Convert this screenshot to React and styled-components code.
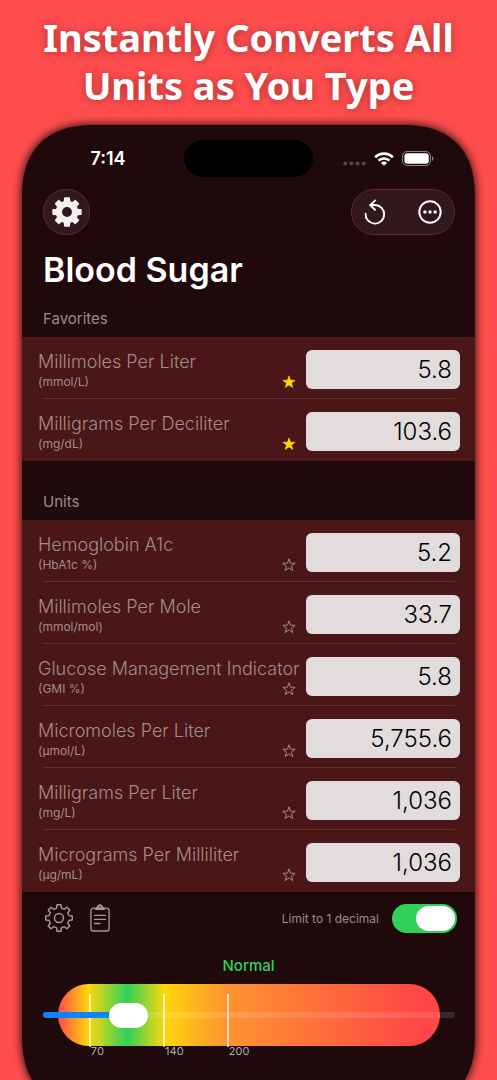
import styled, { createGlobalStyle } from "styled-components";
import React, { useState } from "react";

const MIN = 40;
const MAX = 400;
const MARKS = [70, 140, 200];

const FAVORITES = [
  { name: "Millimoles Per Liter", unit: "(mmol/L)", value: "5.8" },
  { name: "Milligrams Per Deciliter", unit: "(mg/dL)", value: "103.6" },
];

const UNITS = [
  { name: "Hemoglobin A1c", unit: "(HbA1c %)", value: "5.2" },
  { name: "Millimoles Per Mole", unit: "(mmol/mol)", value: "33.7" },
  { name: "Glucose Management Indicator", unit: "(GMI %)", value: "5.8" },
  { name: "Micromoles Per Liter", unit: "(µmol/L)", value: "5,755.6" },
  { name: "Milligrams Per Liter", unit: "(mg/L)", value: "1,036" },
  { name: "Micrograms Per Milliliter", unit: "(µg/mL)", value: "1,036" },
];

const toPercent = (value) => ((value - MIN) / (MAX - MIN)) * 100;

// outline of a gear with eight round-cornered teeth
const gearPath = (c, outer, inner) => {
  const points = [];
  for (let i = 0; i < 8; i++) {
    const a = (i * Math.PI) / 4 - Math.PI / 2;
    [[-0.24, inner], [-0.15, outer], [0.15, outer], [0.24, inner]].forEach(([d, r]) => {
      points.push(`${(c + r * Math.cos(a + d)).toFixed(2)} ${(c + r * Math.sin(a + d)).toFixed(2)}`);
    });
  }
  return `M${points.join("L")}Z`;
};

const STAR = "M7 0.8L8.5 5.2L13.2 5.3L9.5 8.1L10.8 12.6L7 9.9L3.2 12.6L4.5 8.1L0.8 5.3L5.5 5.2Z";

const UnitRow = ({ name, unit, value, favorite }) => {
  const [starred, setStarred] = useState(favorite);
  const id = unit.replace(/[^\w]/g, "");

  return (
    <Row>
      <RowBody>
        <Name htmlFor={id}>{name}</Name>
        <UnitLine>
          <Unit>{unit}</Unit>
          <StarButton type="button" aria-label={`Favorite ${name}`} onClick={() => setStarred(!starred)}>
            <svg width="14" height="14" viewBox="0 0 14 14">
              <path
                d={STAR}
                fill={starred ? "#ffd60a" : "none"}
                stroke={starred ? "#ffd60a" : "#a39596"}
                strokeWidth={starred ? 0.6 : 0.9}
                strokeLinejoin="round"
              />
            </svg>
          </StarButton>
        </UnitLine>
      </RowBody>
      <Value id={id} type="text" inputMode="decimal" defaultValue={value} />
    </Row>
  );
};

const App = () => {
  const [level, setLevel] = useState(103.6);

  return (
    <>
      <GlobalStyle />
      <Page>
        <Headline>
          Instantly Converts All
          <br />
          Units as You Type
        </Headline>
        <Phone>
          <StatusBar>
            <Time>7:14</Time>
            <Island />
            <StatusIcons>
              <svg width="23" height="5" viewBox="0 0 23 5" fill="#584648">
                <circle cx="2.3" cy="2.5" r="2" />
                <circle cx="8.4" cy="2.5" r="2" />
                <circle cx="14.5" cy="2.5" r="2" />
                <circle cx="20.6" cy="2.5" r="2" />
              </svg>
              <svg width="20" height="14" viewBox="0 0 20 14" fill="none" stroke="#fff" strokeWidth="2.6">
                <path d="M1.2 5.2C6.2 0.4 13.8 0.4 18.8 5.2" />
                <path d="M4.5 8.6C7.6 5.7 12.4 5.7 15.5 8.6" />
                <path d="M10 13.8L6.9 10.7C8.6 9.1 11.4 9.1 13.1 10.7Z" fill="#fff" stroke="none" />
              </svg>
              <svg width="32" height="15" viewBox="0 0 32 15">
                <rect x="0.5" y="0.5" width="28" height="14" rx="4.6" fill="none" stroke="#8f8485" />
                <rect x="2.4" y="2.3" width="24.4" height="10.4" rx="3" fill="#fff" />
                <path d="M30 5C31.9 5.8 31.9 9.2 30 10Z" fill="#8f8485" />
              </svg>
            </StatusIcons>
          </StatusBar>

          <NavBar>
            <Capsule>
              <NavButton type="button" aria-label="Settings">
                <svg width="30" height="30" viewBox="0 0 30 30">
                  <path
                    d={`${gearPath(15, 14, 10.6)}M15 9.2a5.8 5.8 0 1 0 0 11.6a5.8 5.8 0 1 0 0-11.6Z`}
                    fill="#f5f0f1"
                    fillRule="evenodd"
                    stroke="#f5f0f1"
                    strokeWidth="1.7"
                    strokeLinejoin="round"
                  />
                </svg>
              </NavButton>
            </Capsule>
            <Capsule $group>
              <NavButton type="button" aria-label="Reset">
                <Icon width="24" height="26" viewBox="0 0 24 26" strokeWidth="1.9">
                  <path d="M2.6 14.6A9.3 9.3 0 1 0 12 6L7.6 6" />
                  <path d="M12.2 1.4L7.2 6.1L12 10.8" />
                </Icon>
              </NavButton>
              <NavButton type="button" aria-label="More">
                <Icon width="24" height="24" viewBox="0 0 24 24" strokeWidth="1.9">
                  <circle cx="12" cy="12" r="10.7" />
                  <g fill="#fff" stroke="none">
                    <circle cx="6.9" cy="12" r="1.7" />
                    <circle cx="12" cy="12" r="1.7" />
                    <circle cx="17.1" cy="12" r="1.7" />
                  </g>
                </Icon>
              </NavButton>
            </Capsule>
          </NavBar>

          <Title>Blood Sugar</Title>

          <SectionTitle>Favorites</SectionTitle>
          <List>
            {FAVORITES.map((item) => (
              <UnitRow key={item.unit} {...item} favorite />
            ))}
          </List>

          <SectionTitle $tall>Units</SectionTitle>
          <List>
            {UNITS.map((item) => (
              <UnitRow key={item.unit} {...item} favorite={false} />
            ))}
          </List>

          <Toolbar>
            <ToolButton type="button" aria-label="Options">
              <svg width="30" height="30" viewBox="0 0 30 30" fill="none" stroke="#a39b9c" strokeWidth="1.4" strokeLinejoin="round">
                <path d={gearPath(15, 13.4, 10.2)} />
                <circle cx="15" cy="15" r="4.5" />
              </svg>
            </ToolButton>
            <ToolButton type="button" aria-label="Copy">
              <svg width="20" height="28" viewBox="0 0 20 28" fill="none" stroke="#a39b9c" strokeWidth="1.3" strokeLinecap="round">
                <path d="M5 4.2H3.2A2.3 2.3 0 0 0 0.9 6.5V24.7A2.3 2.3 0 0 0 3.2 27H16.8A2.3 2.3 0 0 0 19.1 24.7V6.5A2.3 2.3 0 0 0 16.8 4.2H15" />
                <path d="M5.8 5.4V4.2Q5.8 3.4 7.6 3.3A2.4 2.4 0 0 1 12.4 3.3Q14.2 3.4 14.2 4.2V5.4Z" fill="#a39b9c" />
                <circle cx="10" cy="3" r="0.8" fill="#1f090b" stroke="none" />
                <path d="M4.6 11.3H15.4M4.6 15.4H15.4M4.6 19.5H10" />
              </svg>
            </ToolButton>
            <SwitchLabel htmlFor="limit">Limit to 1 decimal</SwitchLabel>
            <Switch id="limit" type="checkbox" role="switch" defaultChecked />
          </Toolbar>

          <Level>Normal</Level>
          <Gauge>
            <Band>
              {MARKS.map((mark) => (
                <Mark key={mark} style={{ left: `${toPercent(mark)}%` }}>
                  {mark}
                </Mark>
              ))}
            </Band>
            <Range
              type="range"
              aria-label="Blood sugar in mg/dL"
              min={MIN}
              max={MAX}
              step="0.1"
              value={level}
              onChange={(e) => setLevel(Number(e.target.value))}
              style={{ "--fill": `${toPercent(level)}%` }}
            />
          </Gauge>
        </Phone>
      </Page>
    </>
  );
};

export default App;

const GlobalStyle = createGlobalStyle`
  * {
    box-sizing: border-box;
  }

  body {
    margin: 0;
    background: #ff4d4d;
    font-family: Inter, "Liberation Sans", sans-serif;
  }

  button {
    display: flex;
    padding: 0;
    border: 0;
    background: none;
    cursor: pointer;
  }
`

const Page = styled.main`
  height: 100vh;
  overflow: hidden;
  padding: 13px 22px 0;
`

const Headline = styled.h1`
  margin: 0 0 16px;
  text-align: center;
  color: #ffffff;
  font-family: "Noto Sans", "Open Sans", sans-serif;
  font-size: 38px;
  font-weight: 700;
  line-height: 48px;
  text-shadow: 0 1px 8px rgba(0, 0, 0, 0.35);
`

const Phone = styled.section`
  padding-bottom: 62px;
  border-radius: 74px;
  corner-shape: superellipse(1.3);
  background: #1f090b;
  box-shadow: 0 0 9px 1px rgba(0, 0, 0, 0.8);
`

const StatusBar = styled.div`
  display: grid;
  grid-template-columns: 1fr 129px 1fr;
  align-items: center;
  padding-top: 15px;
`

const Time = styled.span`
  padding-left: 10px;
  text-align: center;
  color: #ffffff;
  font-size: 18px;
  font-weight: 600;
`

const Island = styled.div`
  height: 37px;
  border-radius: 19px;
  background: #000000;
`

const StatusIcons = styled.div`
  display: flex;
  align-items: center;
  gap: 8px;
  padding-left: 30px;

  svg:first-child {
    margin-top: 9px;
  }
`

const NavBar = styled.nav`
  display: flex;
  justify-content: space-between;
  padding: 12px 20px 0 21px;
`

const Capsule = styled.div`
  display: flex;
  gap: 10px;
  padding-right: ${(props) => (props.$group ? "2px" : "0")};
  border: 1px solid #5c2a2c;
  border-radius: 23px;
  background: #32181b;
`

const NavButton = styled.button`
  align-items: center;
  justify-content: center;
  width: 45px;
  height: 44px;
`

const Icon = styled.svg`
  fill: none;
  stroke: #ffffff;
  stroke-linecap: round;
  stroke-linejoin: round;
`

const Title = styled.h2`
  margin: 15px 21px 0;
  color: #ffffff;
  font-size: 34px;
  font-weight: 600;
  line-height: 40px;
`

const SectionTitle = styled.h3`
  margin: 0;
  padding: ${(props) => (props.$tall ? "31px 21px 8px" : "19px 21px 8px")};
  color: #948d8e;
  font-size: 15px;
  font-weight: 400;
  line-height: 20px;
`

const List = styled.ul`
  margin: 0;
  padding: 0;
  list-style: none;
  background: #4a1617;
`

const Row = styled.li`
  display: flex;
  align-items: center;
  gap: 10px;
  height: 62px;
  padding: 2px 15px 0 16px;

  &:not(:last-child) {
    background: linear-gradient(#5c3335, #5c3335) 21px 100% / calc(100% - 41px) 1px no-repeat;
  }
`

const RowBody = styled.div`
  flex: 1;
  min-width: 0;
  padding-top: 4px;
`

const Name = styled.label`
  display: block;
  color: #a58b8c;
  font-size: 18px;
  font-weight: 300;
  line-height: 22px;
  white-space: nowrap;
`

const UnitLine = styled.div`
  display: flex;
  align-items: center;
  justify-content: space-between;
`

const Unit = styled.span`
  color: #a58b8c;
  font-size: 12px;
  line-height: 18px;
`

const StarButton = styled.button`
`

const Value = styled.input`
  width: 154px;
  height: 39px;
  padding: 0 8px;
  border: 0;
  border-radius: 6px;
  background: #e2dcdc;
  color: #000000;
  font-family: inherit;
  font-size: 24px;
  font-weight: 300;
  text-align: right;
`

const Toolbar = styled.div`
  display: flex;
  align-items: center;
  padding: 11px 18px 0 22px;
`

const ToolButton = styled.button`
  margin-right: 16px;
`

const SwitchLabel = styled.label`
  margin-left: auto;
  color: #948d8e;
  font-size: 12px;
`

const Switch = styled.input`
  appearance: none;
  display: flex;
  width: 65px;
  height: 29px;
  margin: 0 0 0 13px;
  padding: 2px;
  border-radius: 15px;
  background: #4a3b3d;
  cursor: pointer;

  &::before {
    content: "";
    width: 39px;
    border-radius: 13px;
    background: #ffffff;
  }

  &:checked {
    justify-content: flex-end;
    background: #30d158;
  }
`

const Level = styled.p`
  margin: 23px 0 8px;
  text-align: center;
  color: #30d158;
  font-size: 15px;
  font-weight: 500;
  line-height: 20px;
`

const Gauge = styled.div`
  display: grid;
  align-items: center;
  padding: 0 20px 0 21px;

  > * {
    grid-area: 1 / 1;
  }
`

const Band = styled.div`
  position: relative;
  height: 62px;
  margin: 0 15px;
  border-radius: 31px;
  background: linear-gradient(
    90deg,
    #ff4b4b 0%,
    #ffd60a 8%,
    #30d158 18%,
    #ffd60a 28%,
    #ff9430 44%,
    #ff4747 94%
  );
`

const Mark = styled.span`
  position: absolute;
  top: 10px;
  margin-left: -1px;
  padding-top: 50px;
  border-left: 2px solid;
  border-image: linear-gradient(rgba(255, 255, 255, 0.7) 52px, transparent 52px) 2;
  color: #b3acad;
  font-size: 11px;
  line-height: 14px;
`

const Range = styled.input`
  appearance: none;
  position: relative;
  width: 100%;
  height: 26px;
  margin: 0;
  background: none;

  &::-webkit-slider-runnable-track {
    height: 6px;
    border-radius: 3px;
    background: linear-gradient(
      90deg,
      #0a84ff var(--fill),
      rgba(255, 255, 255, 0.12) var(--fill)
    );
  }

  &::-webkit-slider-thumb {
    appearance: none;
    width: 39px;
    height: 25px;
    margin-top: -9px;
    border-radius: 13px;
    background: #ffffff;
  }
`
